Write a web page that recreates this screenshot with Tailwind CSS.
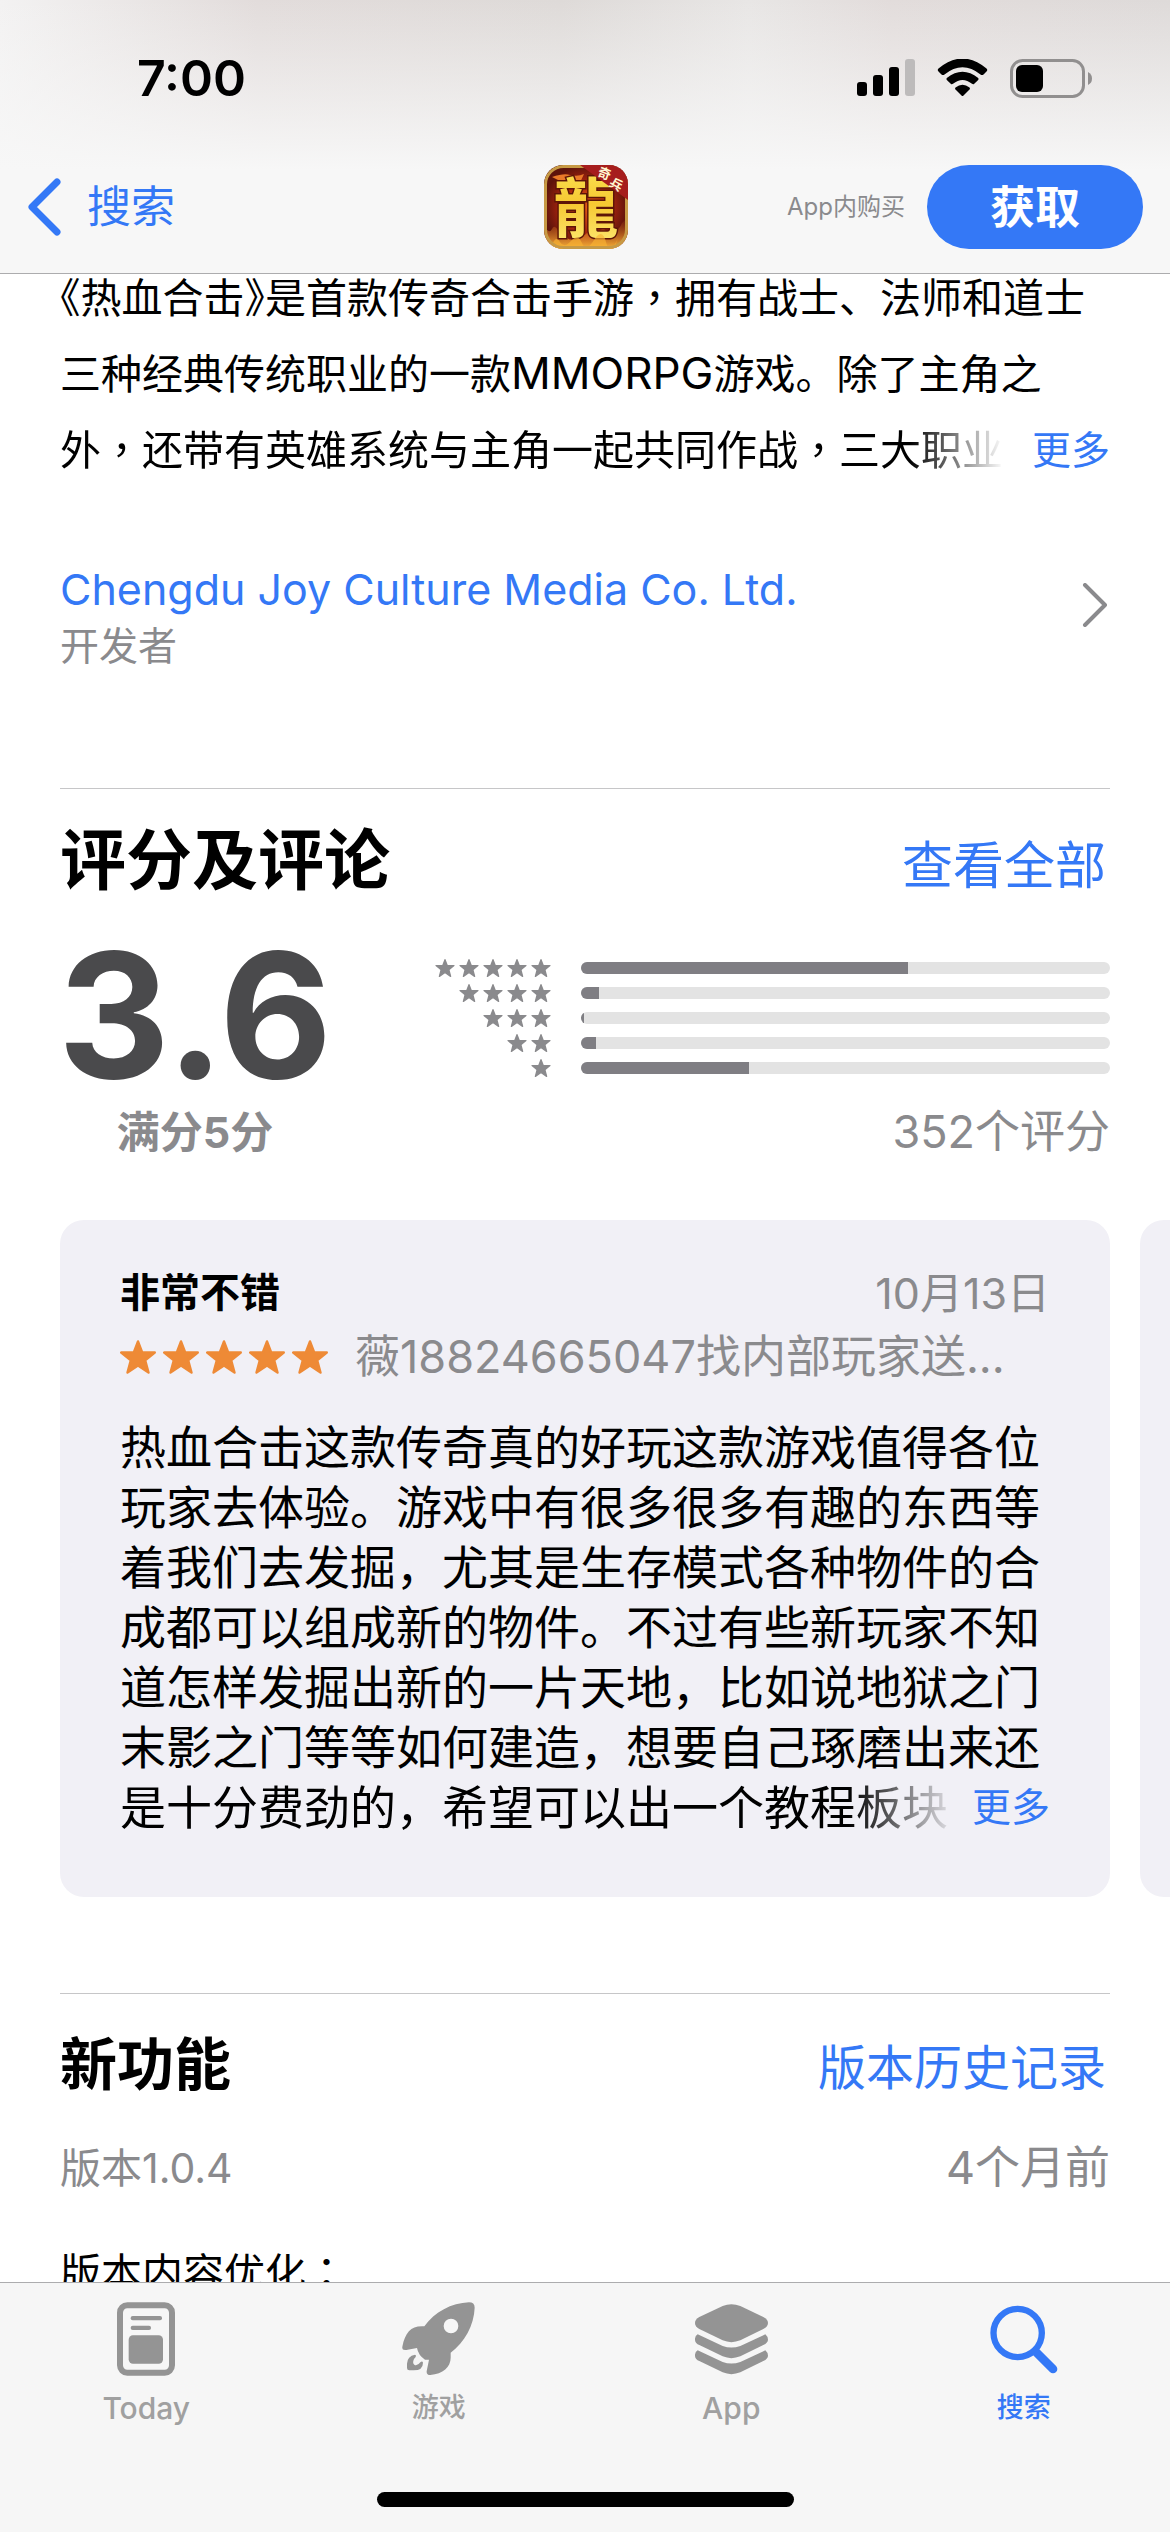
<!DOCTYPE html>
<html lang="zh-CN">
<head>
<meta charset="utf-8">
<meta name="viewport" content="width=device-width, initial-scale=1">
<title>App Store</title>
<script src="https://cdn.jsdelivr.net/npm/@tailwindcss/browser@4"></script>
</head>
<body class="bg-white text-black font-['Inter','Noto_Sans_CJK_SC',sans-serif]">
<svg class="hidden" aria-hidden="true">
  <symbol id="star" viewBox="0 0 60 56"><path d="M30 2 37 20.500H58L42 33.500 47.500 54 30 42 12.500 54 18 33.500 2 20.500H23Z" fill="currentColor" stroke="currentColor" stroke-width="4" stroke-linejoin="round"/></symbol>
</svg>
<div class="flex h-screen flex-col overflow-hidden">

  <header class="shrink-0 border-b border-[#acacae] bg-[linear-gradient(to_bottom,#f7f7f700,#f7f7f7_170px),linear-gradient(to_right,#f3f2f2,#e2dcdb_22%,#dedad8_48%,#e8e6e5_64%,#e2dcdb_76%,#dedad9)]">
    <div class="flex h-[154px] items-center justify-between pt-0.5 pr-[77px] pl-[137px]">
      <span class="text-[50px] leading-none font-semibold">7:00</span>
      <div class="flex items-center gap-[22px]">
        <svg class="h-[38px] w-[58px]" viewBox="0 0 58 38"><rect x="0" y="23" width="10" height="14" rx="3"/><rect x="16" y="16" width="10" height="21" rx="3"/><rect x="32" y="8" width="10" height="29" rx="3"/><rect x="48" y="0" width="10" height="37" rx="3" fill="#bdbbbb"/></svg>
        <svg class="h-[38px] w-[51px]" viewBox="0 0 51 38"><path d="M1.500 9.500Q25.500-10.500 49.500 9.500Q51 11 49.500 12.500L46.500 15.500Q45 16.500 43.500 15.500Q25.500 1 7.500 15.500Q6 16.500 4.500 15.500L1.500 12.500Q0 11 1.500 9.500Z"/><path d="M9.800 19Q25.500 6.500 41.200 19Q42 20 41.200 21L37 25Q36 25.500 35 24.800Q25.500 17 16 24.800Q15 25.500 14 25L9.800 21Q9 20 9.800 19Z"/><path d="M18.500 28.500Q25.500 23 32.500 28.500Q33.500 29.500 32.500 30.500L26.500 36.500Q25.500 37.500 24.500 36.500L18.500 30.500Q17.500 29.500 18.500 28.500Z"/></svg>
        <svg class="h-[39px] w-[83px]" viewBox="0 0 83 39"><rect x="1.500" y="1.500" width="72" height="36" rx="11" fill="none" stroke="#918f8f" stroke-width="3"/><rect x="6" y="6" width="27" height="27" rx="6"/><path d="M78 13Q82 15 82 19.500T78 26Z" fill="#918f8f"/></svg>
      </div>
    </div>
    <div class="grid h-[119px] grid-cols-[1fr_84px_1fr] items-center pr-[27px] pb-[13px] pl-7">
      <a href="#" class="flex items-center gap-[26px] text-[44px] leading-none text-[#3478f6]">
        <svg class="h-[64px] w-[33px]" viewBox="0 0 33 64" fill="none" stroke="currentColor" stroke-width="7" stroke-linecap="round" stroke-linejoin="round"><path d="M29 7 4 32 29 57"/></svg>
        搜索
      </a>
      <svg class="size-[84px]" viewBox="0 0 84 84" role="img" aria-label="热血合击">
        <defs>
          <clipPath id="tile"><rect width="84" height="84" rx="19"/></clipPath>
          <radialGradient id="fire"><stop stop-color="#e25a16"/><stop offset=".6" stop-color="#a5240e"/><stop offset="1" stop-color="#5e140b"/></radialGradient>
          <linearGradient id="gold" x2="0" y2="1"><stop stop-color="#fbe85a"/><stop offset=".5" stop-color="#f6c832"/><stop offset="1" stop-color="#fdec7a"/></linearGradient>
          <linearGradient id="flame" x2="0" y2="1"><stop stop-color="#e5691a" stop-opacity="0"/><stop offset="1" stop-color="#fbb73a"/></linearGradient>
        </defs>
        <g clip-path="url(#tile)">
          <rect width="84" height="84" fill="url(#fire)"/>
          <path d="M8 12Q20 8 26 10 34 12 40 9L34 22 20 18Z" fill="#e97a28"/>
          <path d="M0 84V60Q5 70 8 64T15 68Q18 60 22 70T33 68Q38 74 43 68T54 70Q58 60 62 66T70 60Q74 68 78 58L84 52V84Z" fill="url(#flame)"/>
          <text x="42" y="67" text-anchor="middle" font-family="Noto Sans CJK TC" font-weight="700" font-size="65" fill="url(#gold)" stroke="#5d1507" stroke-width="3" paint-order="stroke">龍</text>
          <path d="M8 80Q12 70 16 77T27 76 38 78 50 75 62 77 74 73L70 84H10Z" fill="#f9b333" opacity=".65"/>
          <rect x="1.500" y="1.500" width="81" height="81" rx="18" fill="none" stroke="#c79a45" stroke-width="3"/>
          <path d="M36 0H84V35Z" fill="#a61d1d"/>
          <g fill="#fff6d2" font-family="Noto Sans CJK SC" font-weight="700" font-size="13"><text x="54" y="13" transform="rotate(20 60 8)">奇</text><text x="66" y="24" transform="rotate(30 72 19)">兵</text></g>
        </g>
      </svg>
      <div class="flex items-center justify-end gap-[22px]">
        <span class="text-2xl text-[#8a8a8d]">App内购买</span>
        <button class="h-[84px] w-[216px] rounded-full bg-[#3478f6] text-[45px] leading-none font-bold text-white">获取</button>
      </div>
    </div>
  </header>

  <main class="min-h-0 flex-1 overflow-hidden px-[60px]">
    <section>
      <div class="-mt-3.5 text-[41px] leading-[76px] whitespace-nowrap">
        <p><span class="[font-feature-settings:'halt']">《</span>热血合击<span class="[font-feature-settings:'halt']">》</span>是首款传奇合击手游<span lang="zh-Hant">，</span>拥有战士、法师和道士</p>
        <p>三种经典传统职业的一款<span class="text-[44px] leading-none">MMORPG</span>游戏。除了主角之</p>
        <div class="flex justify-between">
          <p class="min-w-0 flex-1 overflow-hidden bg-linear-to-r from-black from-90% to-transparent bg-clip-text text-transparent">外<span lang="zh-Hant">，</span>还带有英雄系统与主角一起共同作战<span lang="zh-Hant">，</span>三大职业</p>
          <button class="ml-7 text-[39px] text-[#3478f6]">更多</button>
        </div>
      </div>
      <a href="#" class="mt-[71px] flex items-start justify-between">
        <span class="flex flex-col">
          <span class="text-[43px] leading-[60px] text-[#3478f6]">Chengdu Joy Culture Media Co. Ltd.</span>
          <span class="text-[39px] leading-[54px] text-[#8a8a8d]">开发者</span>
        </span>
        <svg class="mt-6 h-[44px] w-[28px]" viewBox="0 0 28 44" fill="none" stroke="#8a8a8d" stroke-width="4" stroke-linecap="round" stroke-linejoin="round"><path d="M3 2 23 22 3 42"/></svg>
      </a>
    </section>

    <section class="mt-[115px] border-t border-[#c6c6c8] pt-[31px]">
      <div class="flex items-baseline justify-between leading-[80px]">
        <h2 class="text-[66px] font-bold">评分及评论</h2>
        <a href="#" class="pr-1 text-[51px] text-[#3478f6]">查看全部</a>
      </div>
      <div class="mt-[19px] flex justify-between">
        <div class="flex w-[270px] flex-col items-center">
          <span class="text-[174px] leading-[180px] font-bold text-[#4a4a4c]">3.6</span>
          <span class="text-[43px] leading-[54px] font-bold text-[#8a8a8d]">满分5分</span>
        </div>
        <div class="flex flex-col items-end">
          <ul class="mt-[30px] flex h-[150px] flex-col text-[#8a8a8d]">
            <li class="flex h-[25px] items-center justify-end gap-[30px]"><span class="flex gap-1" role="img" aria-label="5星"><svg class="h-[18px] w-5"><use href="#star"/></svg><svg class="h-[18px] w-5"><use href="#star"/></svg><svg class="h-[18px] w-5"><use href="#star"/></svg><svg class="h-[18px] w-5"><use href="#star"/></svg><svg class="h-[18px] w-5"><use href="#star"/></svg></span><span class="h-3 w-[529px] overflow-hidden rounded-full bg-[#e3e3e3]"><span class="block h-full bg-[#7f7e83]" style="width:61.8%"></span></span></li>
            <li class="flex h-[25px] items-center justify-end gap-[30px]"><span class="flex gap-1" role="img" aria-label="4星"><svg class="h-[18px] w-5"><use href="#star"/></svg><svg class="h-[18px] w-5"><use href="#star"/></svg><svg class="h-[18px] w-5"><use href="#star"/></svg><svg class="h-[18px] w-5"><use href="#star"/></svg></span><span class="h-3 w-[529px] overflow-hidden rounded-full bg-[#e3e3e3]"><span class="block h-full bg-[#7f7e83]" style="width:3.4%"></span></span></li>
            <li class="flex h-[25px] items-center justify-end gap-[30px]"><span class="flex gap-1" role="img" aria-label="3星"><svg class="h-[18px] w-5"><use href="#star"/></svg><svg class="h-[18px] w-5"><use href="#star"/></svg><svg class="h-[18px] w-5"><use href="#star"/></svg></span><span class="h-3 w-[529px] overflow-hidden rounded-full bg-[#e3e3e3]"><span class="block h-full bg-[#7f7e83]" style="width:0.6%"></span></span></li>
            <li class="flex h-[25px] items-center justify-end gap-[30px]"><span class="flex gap-1" role="img" aria-label="2星"><svg class="h-[18px] w-5"><use href="#star"/></svg><svg class="h-[18px] w-5"><use href="#star"/></svg></span><span class="h-3 w-[529px] overflow-hidden rounded-full bg-[#e3e3e3]"><span class="block h-full bg-[#7f7e83]" style="width:2.8%"></span></span></li>
            <li class="flex h-[25px] items-center justify-end gap-[30px]"><span class="flex gap-1" role="img" aria-label="1星"><svg class="h-[18px] w-5"><use href="#star"/></svg></span><span class="h-3 w-[529px] overflow-hidden rounded-full bg-[#e3e3e3]"><span class="block h-full bg-[#7f7e83]" style="width:31.7%"></span></span></li>
          </ul>
          <span class="text-[45px] leading-[54px] text-[#8a8a8d]">352个评分</span>
        </div>
      </div>
      <div class="-mr-[60px] mt-[61px] flex gap-[30px] overflow-hidden">
        <article class="w-[calc(100%-60px)] shrink-0 rounded-3xl bg-[#f1f0f6] px-[60px] pt-[41px] pb-[60px]">
          <div class="flex items-center justify-between leading-[64px]">
            <h3 class="text-[40px] font-bold">非常不错</h3>
            <time class="text-[43px] text-[#8a8a8d]">10月13日</time>
          </div>
          <div class="flex items-center gap-[27px]">
            <span class="flex gap-[7px] text-[#ee8a36]" role="img" aria-label="5星"><svg class="h-[34px] w-9"><use href="#star"/></svg><svg class="h-[34px] w-9"><use href="#star"/></svg><svg class="h-[34px] w-9"><use href="#star"/></svg><svg class="h-[34px] w-9"><use href="#star"/></svg><svg class="h-[34px] w-9"><use href="#star"/></svg></span>
            <span class="text-[45px] leading-[64px] whitespace-nowrap text-[#8a8a8d]">薇18824665047找内部玩家送...</span>
          </div>
          <div class="mt-7 text-[46px] leading-[60px] whitespace-nowrap">
            <p>热血合击这款传奇真的好玩这款游戏值得各位<br>玩家去体验。游戏中有很多很多有趣的东西等<br>着我们去发掘，尤其是生存模式各种物件的合<br>成都可以组成新的物件。不过有些新玩家不知<br>道怎样发掘出新的一片天地，比如说地狱之门<br>末影之门等等如何建造，想要自己琢磨出来还</p>
            <div class="flex justify-between">
              <p class="bg-linear-to-r from-black from-88% to-black/10 bg-clip-text text-transparent">是十分费劲的，希望可以出一个教程板块</p>
              <button class="text-[39px] text-[#3478f6]">更多</button>
            </div>
          </div>
        </article>
        <article class="w-[calc(100%-60px)] shrink-0 rounded-3xl bg-[#f1f0f6]"></article>
      </div>
    </section>

    <section class="mt-24 border-t border-[#c6c6c8] pt-[31px]">
      <div class="flex items-baseline justify-between leading-[80px]">
        <h2 class="text-[57px] font-bold">新功能</h2>
        <a href="#" class="pr-1 text-[48px] text-[#3478f6]">版本历史记录</a>
      </div>
      <div class="mt-[28px] flex items-center justify-between leading-[64px] text-[#8a8a8d]">
        <span class="text-[41px]">版本1.0.4</span>
        <span class="text-[45px]">4个月前</span>
      </div>
      <p class="mt-[35px] text-[41px] leading-[76px]">版本内容优化<span lang="zh-Hant">：</span></p>
    </section>
  </main>

  <footer class="shrink-0 border-t border-[#acacae] bg-[#f6f6f6]">
    <nav class="grid grid-cols-4 pt-[19px] text-[27px] leading-[40px] font-medium text-[#a0a0a0]">
      <a href="#" class="flex flex-col items-center gap-3">
        <svg class="h-[74px] w-[58px]" viewBox="171 97 174 222" fill="#949494"><rect x="180" y="107" width="156" height="202" rx="22" fill="none" stroke="#949494" stroke-width="18"/><rect x="212" y="139" width="94" height="13" rx="6"/><rect x="212" y="168" width="61" height="13" rx="6"/><rect x="206" y="197" width="103" height="85" rx="13"/></svg>
        <span class="text-[30px]">Today</span>
      </a>
      <a href="#" class="flex flex-col items-center gap-3">
        <svg class="h-[74px] w-[73px]" viewBox="1027 95 219 222" fill="#949494"><path fill-rule="evenodd" d="M1094 168C1125 125 1175 98 1228 96Q1245 96 1245 112C1243 165 1215 215 1173 247V262C1173 290 1150 310 1112 314Q1100 314 1101 303L1108 268H1096Q1076 255 1072 233L1040 239Q1026 241 1028 229C1037 185 1055 165 1094 168ZM1174 145A22 22 0 1 0 1174 189A22 22 0 1 0 1174 145Z"/><path d="M1066 253Q1043 257 1042 280V293Q1042 300 1049 300H1062Q1090 300 1090 277 1088 271 1082 276 1074 287 1065 284 1057 279 1063 266L1068 260Q1071 254 1066 253Z"/></svg>
        <span>游戏</span>
      </a>
      <a href="#" class="flex flex-col items-center gap-3">
        <svg class="h-[74px] w-[73px]" viewBox="165 95 219 222" fill="#949494"><path d="M248 107Q274 96 301 107L370 140Q384 147 384 158T370 176L301 210Q274 221 248 210L178 176Q165 169 165 158T178 140Z"/><path id="layer" d="M173 192Q164 198 165 209T178 224L248 258Q274 269 301 258L370 224Q384 217 384 208T376 192L301 227Q274 236 248 227Z"/><use href="#layer" y="48"/></svg>
        <span class="text-[30px]">App</span>
      </a>
      <a href="#" class="flex flex-col items-center gap-3 text-[#3478f6]">
        <svg class="h-[74px] w-[68px]" viewBox="1049 95 204 222" fill="none" stroke="currentColor" stroke-linecap="round"><circle cx="1132" cy="188" r="72.500" stroke-width="19"/><path d="M1187 245 1238 296" stroke-width="26"/></svg>
        <span>搜索</span>
      </a>
    </nav>
    <div class="mx-auto mt-[64px] mb-[25px] h-[15px] w-[417px] rounded-full bg-black"></div>
  </footer>
</div>
</body>
</html>
